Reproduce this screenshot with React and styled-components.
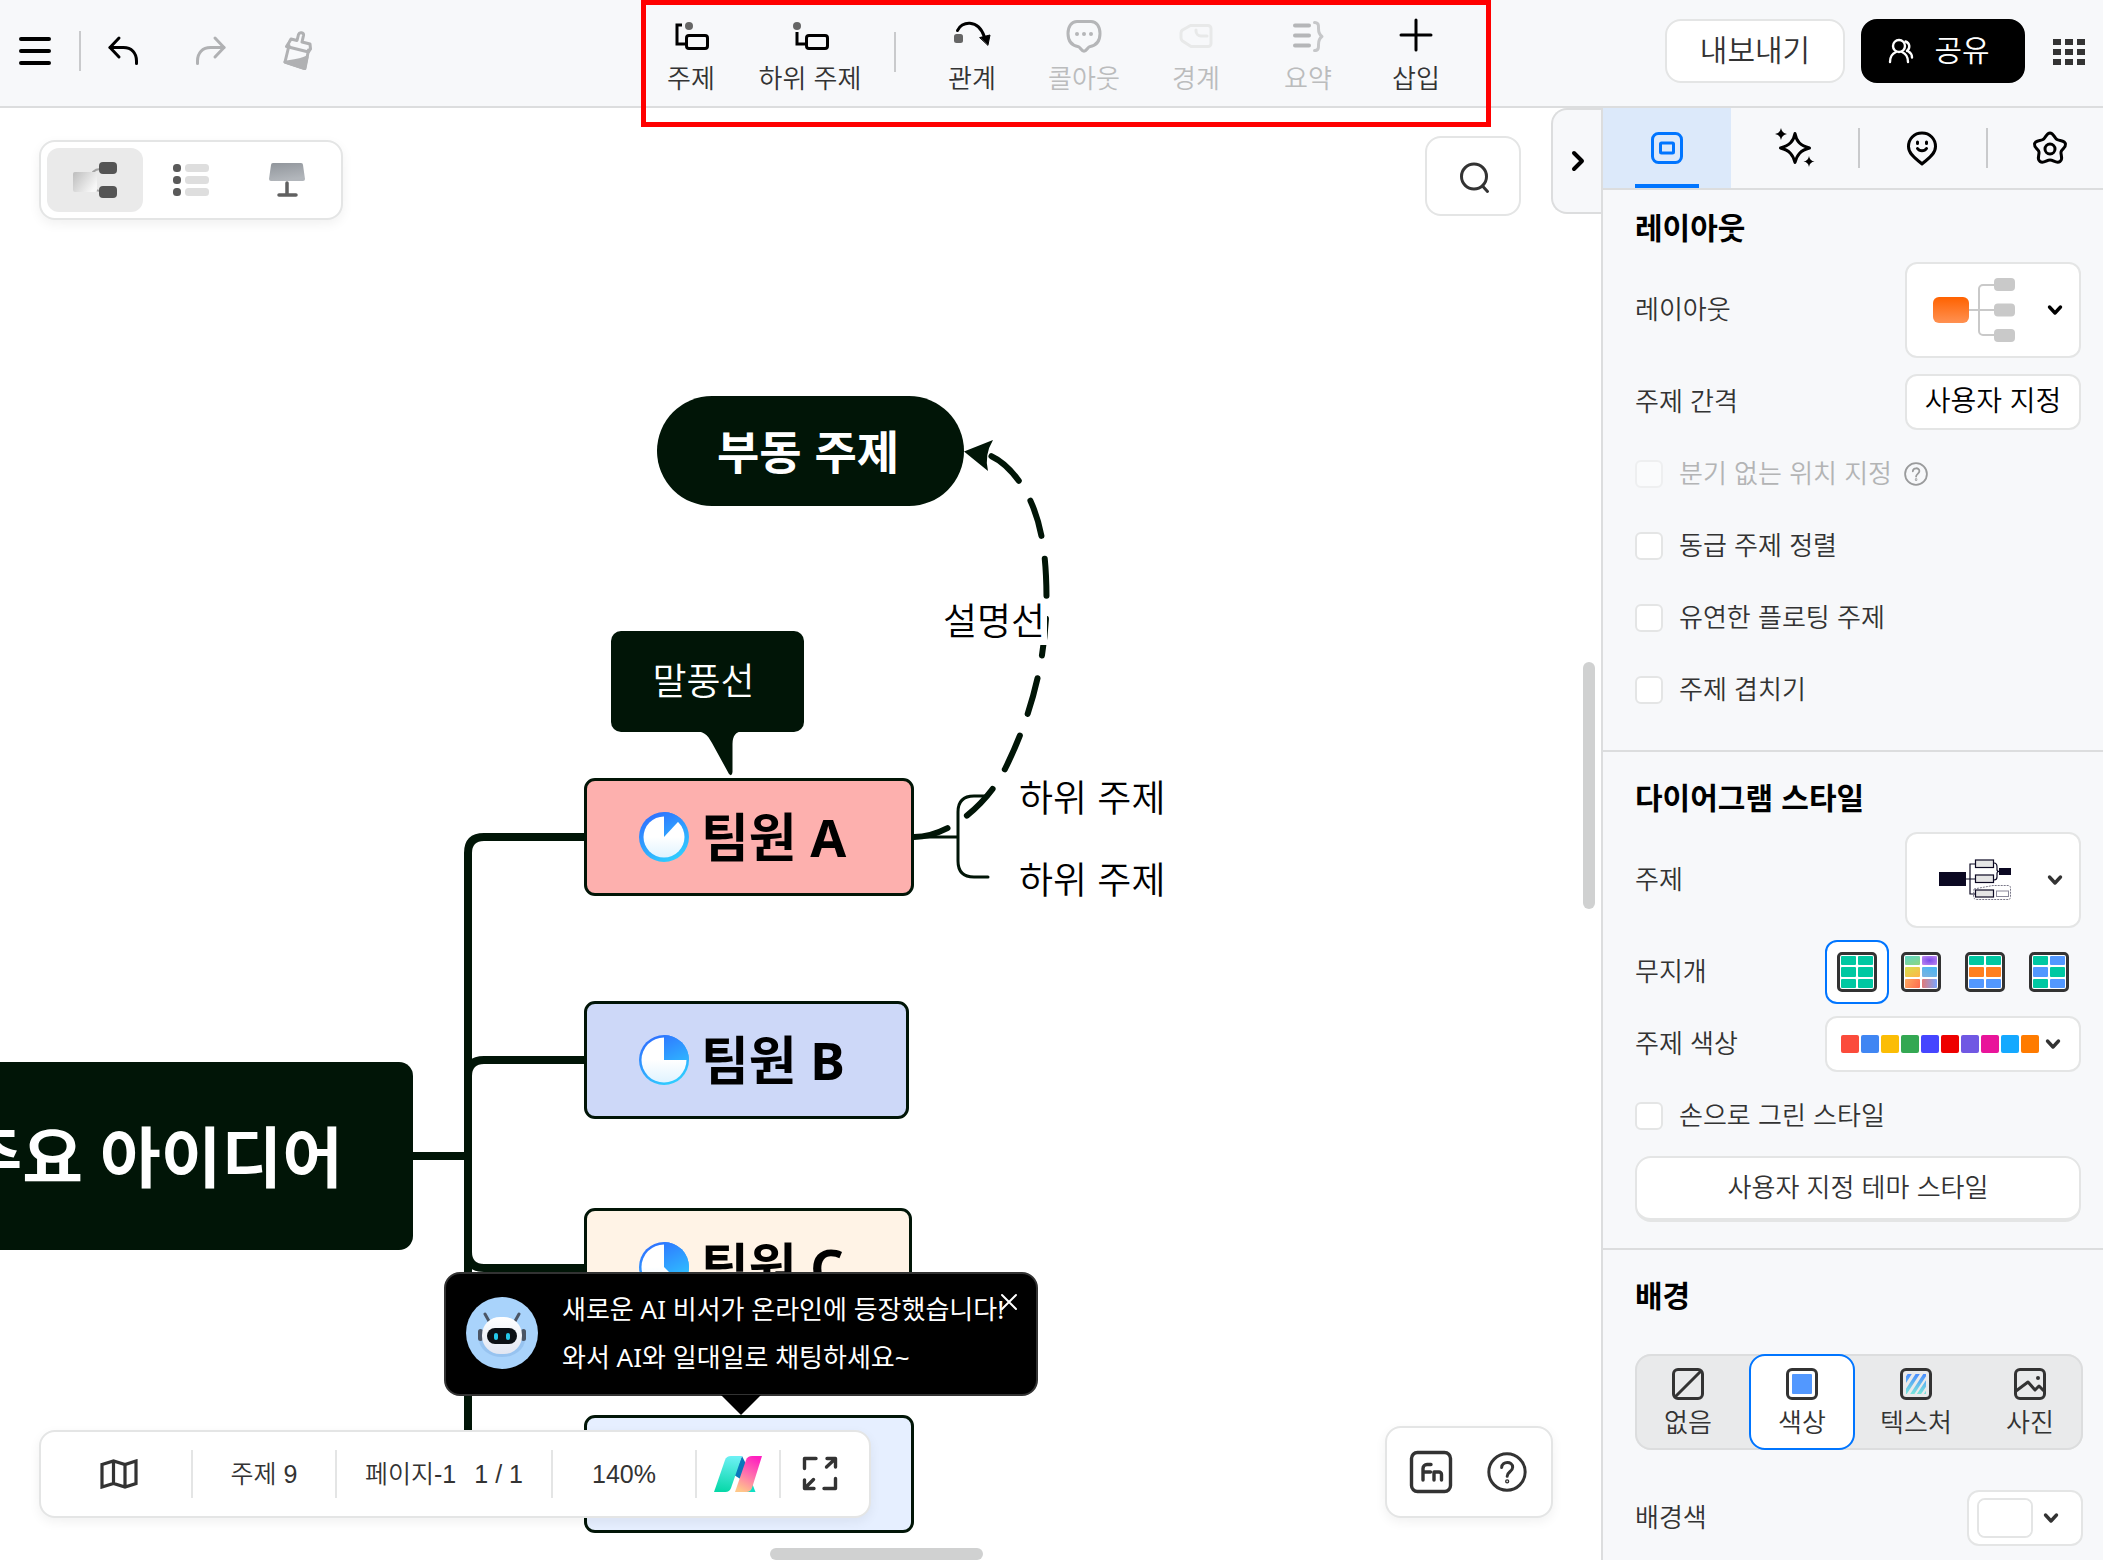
import React, { useState } from 'react';
import styled, { createGlobalStyle, css } from 'styled-components';

const ink = '#333333';
const dark = '#011507';
const line = '#dcddde';
const soft = '#e4e5e5';
const blue = '#0075ff';
const surface = '#f7f8fa';

const GlobalStyle = createGlobalStyle`
  *, *::before, *::after { box-sizing: border-box; }
  html, body, #root { height: 100%; }
  body {
    margin: 0;
    overflow: hidden;
    background: #ffffff;
    color: ${ink};
    font-family: "Liberation Sans", "Noto Sans CJK KR", sans-serif;
    font-size: 26px;
    font-weight: 350;
    line-height: 32px;
  }
  button, input, select { font: inherit; color: inherit; margin: 0; }
  button { border: 0; padding: 0; background: none; cursor: pointer; }
  button:disabled { cursor: default; }
  svg { display: block; flex: none; }
`;

const Page = styled.div`
  display: flex;
  flex-direction: column;
  height: 100vh;
`;

/* ---------- header ---------- */

const Header = styled.header`
  position: relative;
  z-index: 2;
  display: grid;
  grid-template-columns: 641fr 850fr 612fr;
  height: 108px;
  background: ${surface};
  border-bottom: 2px solid ${line};
`;

const HistoryTools = styled.div`
  display: flex;
  align-items: center;
  height: 102px;
  padding-left: 15px;
`;

const IconButton = styled.button`
  display: grid;
  place-items: center;
  width: ${(p) => p.$size || 40}px;
  height: ${(p) => p.$size || 40}px;
  color: ${(p) => (p.$muted ? '#b0b1b3' : '#000000')};
  margin-right: ${(p) => p.$gap || 0}px;
`;

const Rule = styled.span`
  flex: none;
  width: 2px;
  height: 40px;
  margin-right: 22px;
  background: #c9cacc;
`;

const InsertTools = styled.nav`
  position: relative;
  display: flex;
  padding-left: 2px;
`;

const Highlight = styled.div`
  position: absolute;
  inset: 0 0 -21px 0;
  border: 5px solid #ff0000;
  pointer-events: none;
`;

const Tool = styled.button`
  display: flex;
  flex-direction: column;
  align-items: center;
  gap: 7px;
  width: ${(p) => p.$width || 112}px;
  padding-top: 16px;
  color: ${ink};
  white-space: nowrap;
  &:disabled { color: #bbbcbd; }
`;

const ToolRule = styled(Rule)`
  margin: 32px 20px 0 13px;
`;

const HeaderActions = styled.div`
  display: flex;
  align-items: center;
  justify-content: flex-end;
  gap: 16px;
  height: 102px;
  padding-right: 14px;
`;

const ActionButton = styled.button`
  display: flex;
  align-items: center;
  justify-content: center;
  gap: 20px;
  height: 64px;
  width: ${(p) => (p.$primary ? 164 : 180)}px;
  padding-right: ${(p) => (p.$primary ? 8 : 0)}px;
  margin-right: ${(p) => (p.$primary ? 8 : 0)}px;
  border: 2px solid ${(p) => (p.$primary ? '#000000' : soft)};
  border-radius: 16px;
  background: ${(p) => (p.$primary ? '#000000' : '#ffffff')};
  color: ${(p) => (p.$primary ? '#ffffff' : ink)};
  font-size: 30px;
  line-height: 40px;
`;

/* ---------- body ---------- */

const Body = styled.div`
  display: flex;
  flex: 1;
  min-height: 0;
`;

const Canvas = styled.main`
  position: relative;
  flex: 1;
  min-width: 0;
  overflow: hidden;
  background: #ffffff;
`;

const floating = css`
  position: absolute;
  display: flex;
  align-items: center;
  background: #ffffff;
  border: 2px solid ${soft};
  border-radius: 16px;
  box-shadow: 0 4px 12px rgba(0, 0, 0, 0.06);
`;

const ViewSwitch = styled.div`
  ${floating}
  top: 32px;
  left: 39px;
  padding: 6px;
`;

const ViewButton = styled.button`
  display: grid;
  place-items: center;
  width: 96px;
  height: 64px;
  border-radius: 12px;
  background: ${(p) => (p.$active ? '#eaeaea' : 'transparent')};
`;

const SearchButton = styled.button`
  ${floating}
  top: 28px;
  right: 80px;
  justify-content: center;
  width: 96px;
  height: 80px;
  padding: 3px 0 0 3px;
  box-shadow: none;
`;

const CollapseButton = styled.button`
  position: absolute;
  top: 0;
  right: 0;
  display: grid;
  place-items: center;
  width: 50px;
  height: 106px;
  padding-left: 2px;
  background: ${surface};
  border: 2px solid ${line};
  border-right: 0;
  border-radius: 16px 0 0 16px;
`;

const ScrollThumb = styled.div`
  position: absolute;
  border-radius: 6px;
  background: #d0d1d1;
  ${(p) =>
    p.$vertical
      ? 'right: 6px; top: 554px; width: 12px; height: 247px;'
      : 'bottom: 0; left: 770px; width: 213px; height: 12px;'}
`;

const StatusBar = styled.div`
  ${floating}
  left: 39px;
  bottom: 42px;
  height: 88px;
  font-size: 25px;
`;

const StatusCell = styled.button`
  display: flex;
  align-items: center;
  justify-content: center;
  gap: 18px;
  width: ${(p) => p.$width}px;
  height: 48px;
  white-space: nowrap;
  border-right: 2px solid ${soft};
  &:first-child { padding-left: 5px; }
  &:last-child { border-right: 0; padding-right: 10px; }
`;

const HelpBar = styled.div`
  ${floating}
  right: 48px;
  bottom: 42px;
  height: 92px;
  padding: 0 24px 0 22px;
  gap: 34px;
`;

/* ---------- mind map ---------- */

const Wires = styled.svg`
  position: absolute;
  top: 0;
  left: 0;
`;

const place = css`
  position: absolute;
  top: ${(p) => p.$y}px;
  left: ${(p) => p.$x}px;
`;

const topicFont = '"Noto Sans", "Noto Sans CJK KR", sans-serif';

const RootTopic = styled.div`
  ${place}
  display: flex;
  align-items: center;
  justify-content: flex-end;
  width: 500px;
  height: 188px;
  padding-right: 70px;
  border-radius: 14px;
  background: ${dark};
  color: #ffffff;
  font: 700 66px/80px ${topicFont};
  white-space: nowrap;
`;

const FloatingTopic = styled.div`
  ${place}
  display: grid;
  place-items: center;
  width: 307px;
  height: 110px;
  padding: 3px 5px 0 0;
  border-radius: 55px;
  background: ${dark};
  color: #ffffff;
  font-size: 46px;
  font-weight: 700;
  line-height: 56px;
`;

const Callout = styled.div`
  ${place}
  display: grid;
  place-items: center;
  width: 193px;
  height: 101px;
  padding: 2px 8px 0 0;
  border-radius: 10px;
  background: ${dark};
  color: #ffffff;
  font-size: 37px;
  line-height: 48px;
`;

const MainTopic = styled.div`
  ${place}
  display: flex;
  align-items: center;
  gap: 12px;
  width: ${(p) => p.$width}px;
  height: 118px;
  padding-left: 52px;
  border: 3px solid ${dark};
  border-radius: 11px;
  background: ${(p) => p.$fill};
  color: #000000;
  font: 700 52px/64px ${topicFont};
  white-space: nowrap;
`;

const SubTopic = styled.div`
  ${place}
  padding: 0 2px;
  background: #ffffff;
  color: #000000;
  font-size: 37px;
  line-height: 44px;
  white-space: nowrap;
`;

/* ---------- assistant bubble ---------- */

const Bubble = styled.aside`
  position: absolute;
  left: 444px;
  bottom: 164px;
  display: flex;
  align-items: center;
  gap: 24px;
  width: 594px;
  height: 124px;
  padding: 0 0 2px 20px;
  border: 2px solid #333333;
  border-radius: 16px;
  background: #000000;
  color: #ffffff;
  font: 400 26px/48px ${topicFont};
  white-space: nowrap;
  &::after {
    content: "";
    position: absolute;
    left: 275px;
    top: 121px;
    border: 20px solid transparent;
    border-top-color: #000000;
    border-bottom: 0;
  }
`;

const BubbleText = styled.p`
  margin: 0;
`;

const BubbleClose = styled.button`
  position: absolute;
  top: 19px;
  right: 18px;
`;

/* ---------- side panel ---------- */

const Panel = styled.aside`
  display: flex;
  flex-direction: column;
  flex: none;
  width: 502px;
  overflow: hidden;
  background: ${surface};
  border-left: 2px solid ${line};
`;

const Tabs = styled.div`
  display: flex;
  flex: none;
  border-bottom: 2px solid ${line};
`;

const Tab = styled.button`
  position: relative;
  display: grid;
  place-items: center;
  flex: 0 0 128px;
  height: 80px;
  padding-right: ${(p) => (p.$ruled ? 3 : 0)}px;
  background: ${(p) => (p.$active ? '#dce9fa' : 'transparent')};
  &::after {
    content: "";
    position: absolute;
    ${(p) =>
      p.$active
        ? `left: 32px; right: 32px; bottom: 0; height: 4px; background: ${blue};`
        : ''}
  }
  &::before {
    content: "";
    position: absolute;
    ${(p) => (p.$ruled ? 'left: -1px; top: 20px; width: 2px; height: 40px; background: #c9cacc;' : '')}
  }
`;

const Section = styled.section`
  display: flex;
  flex-direction: column;
  padding: ${(p) => p.$pad};
  border-bottom: 2px solid ${line};
  &:last-child { border-bottom: 0; }
`;

const SectionTitle = styled.h2`
  margin: 0 0 ${(p) => p.$below || 10}px;
  color: #000000;
  font-size: 30px;
  font-weight: 700;
  line-height: 46px;
`;

const Row = styled.div`
  display: flex;
  align-items: center;
  justify-content: space-between;
  margin-bottom: ${(p) => p.$below || 0}px;
`;

const RowLabel = styled.label`
  white-space: nowrap;
`;

const Picker = styled.div`
  position: relative;
  display: flex;
  align-items: center;
  justify-content: space-between;
  width: ${(p) => p.$width}px;
  height: ${(p) => p.$height}px;
  padding: ${(p) => p.$pad};
  background: #ffffff;
  border: 2px solid ${soft};
  border-radius: 12px;
`;

const PickerSelect = styled.select`
  position: absolute;
  inset: 0;
  width: 100%;
  height: 100%;
  opacity: 0;
  cursor: pointer;
`;

const SpacingButton = styled.button`
  width: 176px;
  height: 56px;
  background: #ffffff;
  border: 2px solid ${soft};
  border-radius: 12px;
  color: #000000;
  font-size: 28px;
  white-space: nowrap;
`;

const CheckRow = styled.label`
  display: flex;
  align-items: center;
  gap: 16px;
  height: 72px;
  color: ${(p) => (p.$muted ? '#b3b4b5' : ink)};
  white-space: nowrap;
`;

const Check = styled.input`
  appearance: none;
  flex: none;
  width: 28px;
  height: 28px;
  border: 2px solid ${soft};
  border-radius: 6px;
  background: #ffffff;
  &:checked { background: ${blue}; border-color: ${blue}; }
  &:disabled { opacity: 0.45; }
`;

const Hint = styled.span`
  margin-left: -4px;
`;

const HiddenRadio = styled.input`
  position: absolute;
  opacity: 0;
  width: 1px;
  height: 1px;
`;

const RainbowGroup = styled.div`
  display: flex;
`;

const RainbowOption = styled.label`
  position: relative;
  display: grid;
  place-items: center;
  width: 64px;
  height: 64px;
  border: 2px solid ${(p) => (p.$active ? blue : 'transparent')};
  border-radius: 12px;
  background: ${(p) => (p.$active ? '#ffffff' : 'transparent')};
`;

const RainbowGrid = styled.span`
  display: grid;
  grid-template-columns: 1fr 1fr;
  grid-template-rows: repeat(3, 1fr);
  gap: 2px;
  width: 40px;
  height: 40px;
  padding: 1px;
  border: 3px solid ${ink};
  border-radius: 5px;
  background: #ffffff;
`;

const RainbowCell = styled.span`
  border-radius: 1px;
  background: ${(p) => p.$fill};
`;

const Swatches = styled.span`
  display: flex;
  gap: 2px;
`;

const Swatch = styled.span`
  width: 18px;
  height: 18px;
  border-radius: 2px;
  background: ${(p) => p.$fill};
`;

const ThemeButton = styled.button`
  height: 66px;
  margin-top: 4px;
  background: #ffffff;
  border: 2px solid ${soft};
  border-bottom-width: 4px;
  border-radius: 16px;
`;

const Segments = styled.div`
  display: grid;
  grid-template-columns: repeat(4, 1fr);
  gap: 8px;
  height: 96px;
  margin-bottom: 40px;
  border-radius: 16px;
  background: #e9eaeb;
  box-shadow: inset 0 0 0 2px ${line};
`;

const Segment = styled.label`
  position: relative;
  display: flex;
  flex-direction: column;
  align-items: center;
  gap: 7px;
  padding-top: 12px;
  border: 2px solid ${(p) => (p.$active ? blue : 'transparent')};
  border-radius: 16px;
  background: ${(p) => (p.$active ? '#ffffff' : 'transparent')};
  white-space: nowrap;
`;

const ColorInput = styled.input`
  appearance: none;
  width: 56px;
  height: 40px;
  padding: 0;
  border: 2px solid ${soft};
  border-radius: 8px;
  background: #ffffff;
  overflow: hidden;
  &::-webkit-color-swatch-wrapper { padding: 0; }
  &::-webkit-color-swatch { border: 0; }
`;

/* ---------- drawings ---------- */

const Stroke = ({ w = 40, h = 40, sw = 3, color = 'currentColor', children }) => (
  <svg
    width={w}
    height={h}
    viewBox={`0 0 ${w} ${h}`}
    fill="none"
    stroke={color}
    strokeWidth={sw}
    strokeLinecap="round"
    strokeLinejoin="round"
    aria-hidden="true"
  >
    {children}
  </svg>
);

const Chevron = ({ color = ink }) => (
  <Stroke w={16} h={12} sw={3.4} color={color}>
    <path d="M2.5 3l5.5 6 5.5-6" />
  </Stroke>
);

const TopicIcon = () => (
  <Stroke color="#000">
    <path d="M11 9H6v19h9" strokeLinecap="butt" strokeLinejoin="miter" />
    <rect x="15.5" y="19.5" width="21" height="13" rx="2.5" />
    <circle cx="18" cy="10" r="4" fill="#666" stroke="none" />
  </Stroke>
);

const SubtopicIcon = () => (
  <Stroke color="#000">
    <path d="M7 16v12h9" strokeLinecap="butt" strokeLinejoin="miter" />
    <rect x="16.5" y="19.5" width="21" height="13" rx="2.5" />
    <circle cx="7" cy="10" r="4" fill="#666" stroke="none" />
  </Stroke>
);

const RelationIcon = () => (
  <Stroke color="#000">
    <path d="M5.500 14.500C9 5.500 26 2 32.500 21" />
    <path d="M28 21.500l10-2.500-2 10z" fill="#000" stroke="#000" strokeWidth="1" />
    <rect x="2" y="18" width="9" height="9" rx="2.5" fill="#666" stroke="none" />
  </Stroke>
);

const CalloutIcon = () => (
  <Stroke color="#b5b6b8">
    <path d="M13 5.500h14c5.500 0 9 5 9 12 0 8-3.500 12-10.500 13.200-1.500.3-3 4.500-5.500 4.500s-4-4.200-5.500-4.500C7.500 29.500 4 25.500 4 17.500c0-7 3.500-12 9-12z" />
    <g fill="#b5b6b8" stroke="none">
      <circle cx="13" cy="18" r="2" />
      <circle cx="20" cy="18" r="2" />
      <circle cx="27" cy="18" r="2" />
    </g>
  </Stroke>
);

const BoundaryIcon = () => (
  <Stroke color="#e8e9e9">
    <path d="M14.500 9.500H32a3 3 0 013 3v15a3 3 0 01-3 3H15L6.500 25a4 4 0 01-1.500-3v-5a4 4 0 011.500-3z" />
    <path d="M20 14v1a5 5 0 005 5h6" />
  </Stroke>
);

const SummaryIcon = () => (
  <Stroke color="#b5b6b8">
    <path d="M7 9.500h14M7 19.500h14M7 29.500h14" strokeWidth="4" />
    <path d="M26.500 6.500c4.500 0 4 3.500 4 6 0 3.500.5 6 3.500 8-3 2-3.500 4.500-3.500 8 0 2.500.5 6-4 6" stroke="#c6c7c9" />
  </Stroke>
);

const PlusIcon = () => (
  <Stroke color="#000">
    <path d="M20 4v30M5 19h30" />
  </Stroke>
);

const MenuIcon = () => (
  <Stroke w={32} h={28} sw={4} color="#000">
    <path d="M2 2h28M2 14h28M2 26h28" />
  </Stroke>
);

const UndoIcon = ({ flip }) => (
  <Stroke w={32} h={32}>
    <g transform={flip ? 'translate(32 0) scale(-1 1)' : undefined}>
      <path d="M12 3L3 12.500 12 22" />
      <path d="M3 12.500h13.500c8 0 13 5.500 13 13.500v2.500" />
    </g>
  </Stroke>
);

const BrushIcon = () => (
  <Stroke w={36} h={40}>
    <path d="M8 11.500l2-3.500 6 1.500 1.500-6c1-3 5.500-2 5 1l-1.500 6.500 8 2 .5 5-2 3-22-5.500z" />
    <path d="M8 14.500L4 31l20 6.500 3.500-18.500" />
    <path d="M4 31c8-1 16-1.500 22-5l-2.500 11.500z" fill="currentColor" />
  </Stroke>
);

const PeopleIcon = () => (
  <Stroke w={26} h={26} sw={2.4} color="#fff">
    <circle cx="11" cy="8" r="6" />
    <path d="M2 24c0-5 2.500-8.500 6-10M20 24c0-5-2.500-8.500-6-10" />
    <path d="M17.500 3.500c4.500 1.500 5 6.500 1.500 9.500M20.500 13.500c2.500 1.500 3.500 3.500 3.500 6" />
  </Stroke>
);

const AppsIcon = () => (
  <svg width="32" height="28" viewBox="0 0 32 28" fill={ink} aria-hidden="true">
    {[0, 12, 24].map((x) =>
      [2, 12, 22].map((y) => <rect key={`${x}-${y}`} x={x} y={y} width="8" height="6" />)
    )}
  </svg>
);

const MapViewIcon = () => (
  <svg width="48" height="40" viewBox="0 0 48 40" aria-hidden="true">
    <defs>
      <linearGradient id="mv" x1="0" y1="0" x2="1" y2="0.600">
        <stop offset="0" stopColor="#bdbdbd" />
        <stop offset="1" stopColor="#f7f7f7" />
      </linearGradient>
    </defs>
    <path d="M29 9c-6 0-9 4-10 11 1 7 4 11 10 11" fill="none" stroke="#a3a3a3" strokeWidth="2" />
    <rect x="2" y="12" width="24" height="20" rx="2" fill="url(#mv)" />
    <rect x="28" y="2" width="18" height="12" rx="4" fill="#555" />
    <rect x="28" y="26" width="18" height="12" rx="4" fill="#555" />
  </svg>
);

const OutlineViewIcon = () => (
  <svg width="36" height="32" viewBox="0 0 36 32" aria-hidden="true">
    {[0, 12, 24].map((y) => (
      <g key={y}>
        <rect x="0" y={y} width="8" height="8" rx="3.5" fill="#5a5a5a" />
        <rect x="12" y={y} width="24" height="8" rx="3.5" fill="#dedede" />
      </g>
    ))}
  </svg>
);

const SlidesViewIcon = () => (
  <svg width="36" height="34" viewBox="0 0 36 34" aria-hidden="true">
    <defs>
      <linearGradient id="sv" x1="0" y1="0" x2="0.300" y2="1">
        <stop offset="0" stopColor="#90959b" />
        <stop offset="1" stopColor="#b2b6bb" />
      </linearGradient>
    </defs>
    <path d="M4 0h28a2 2 0 012 2l2 14a2 2 0 01-2 2H2a2 2 0 01-2-2L2 2a2 2 0 012-2z" fill="url(#sv)" />
    <path d="M18 20v12M10 32h17" stroke="#606060" strokeWidth="3.5" strokeLinecap="round" />
  </svg>
);

const SearchIcon = () => (
  <Stroke w={30} h={32} sw={3} color={ink}>
    <circle cx="14" cy="14.500" r="12.500" />
    <path d="M22.500 24l5 5.500" />
  </Stroke>
);

const StyleTabIcon = () => (
  <Stroke w={36} h={36} color={blue}>
    <rect x="3.5" y="3.5" width="29" height="29" rx="6" />
    <rect x="11.5" y="13" width="13" height="10" rx="1" />
  </Stroke>
);

const SparkleIcon = () => (
  <Stroke w={40} h={40} color="#000">
    <path d="M20 5.500c1.500 8 5 12 14.500 14.500C25.500 22.500 22 26.500 20 34.500 18 26.500 14.500 22.500 5.500 20 14.500 17.500 18.500 13.500 20 5.500z" />
    <path d="M6 0q.8 5.200 6 6-5.200.8-6 6-.8-5.200-6-6 5.200-.8 6-6zM34 28q.7 4.800 5.500 5.500-4.800.7-5.500 5.500-.7-4.800-5.500-5.500 4.800-.7 5.500-5.500z" fill="#000" stroke="none" />
  </Stroke>
);

const StickerIcon = () => (
  <Stroke w={32} h={36} color="#000">
    <path d="M16 3c8 0 13.500 6 13.500 13.500C29.500 25 20 30 16 34 12 30 2.500 25 2.500 16.500 2.500 9 8 3 16 3z" />
    <path d="M11.500 12v1.500M20.500 12v1.500M11.500 18.500c2 3 7 3 9 0" />
  </Stroke>
);

const FlowerIcon = () => (
  <Stroke w={36} h={36} color="#000">
    <path d="M18 3c3.500 0 4.500 5 7 6.500s8 .5 8.500 4.500-4 5-4.500 8 2.500 7-1 9.500-6.500-1.500-10-1.500-6.500 4-10 1.500-.5-6.500-1-9.500-5-4-4.500-8 6-3 8.500-4.500S14.500 3 18 3z" />
    <circle cx="18" cy="19" r="5" />
  </Stroke>
);

const CollapseIcon = () => (
  <Stroke w={16} h={24} sw={4} color="#000">
    <path d="M4 4l8 8-8 8" />
  </Stroke>
);

const HelpIcon = ({ size, color, sw = 1.8 }) => (
  <svg width={size} height={size} viewBox="0 0 24 24" fill="none" stroke={color} strokeWidth={sw} strokeLinecap="round" aria-hidden="true">
    <circle cx="12" cy="12" r="10.900" />
    <path d="M8.800 9.300c.2-4 6.600-4 6.600-.2 0 2.700-3.300 2.800-3.300 5.400" />
    <circle cx="12.100" cy="17.600" r="0.400" />
  </svg>
);

const FnIcon = () => (
  <Stroke w={44} h={44} sw={3.4} color={ink}>
    <rect x="2.5" y="2.5" width="39" height="39" rx="6" />
    <path d="M14 30V18.500a4 4 0 014-4h4M14 22h7.500M25 30v-8h5a2.500 2.500 0 012.500 2.500V30" />
  </Stroke>
);

const LayoutPreview = () => (
  <svg width="82" height="64" viewBox="0 0 82 64" aria-hidden="true">
    <defs>
      <linearGradient id="lp" x1="0" y1="0" x2="0" y2="1">
        <stop offset="0" stopColor="#ff6200" />
        <stop offset="1" stopColor="#ff9152" />
      </linearGradient>
    </defs>
    <path d="M36 32h26M62 7H50a4 4 0 00-4 4v42a4 4 0 004 4h12" fill="none" stroke="#c9c9c9" strokeWidth="2" />
    <rect y="19" width="36" height="26" rx="6" fill="url(#lp)" />
    <rect x="61" y="0" width="21" height="13" rx="4" fill="#c9c9c9" />
    <rect x="61" y="25.5" width="21" height="13" rx="4" fill="#c9c9c9" />
    <rect x="61" y="51" width="21" height="13" rx="4" fill="#c9c9c9" />
  </svg>
);

const ThemePreview = () => (
  <svg width="72" height="42" viewBox="0 0 72 42" fill="none" aria-hidden="true">
    <rect y="13" width="27" height="14" fill="#0b0822" />
    <path d="M27 20h9M36 5h-5v30h5M55 4q3 0 3 4v2.500q0 2 2 2-2 0-2 2V18q0 3-3 3" stroke="#0b0822" strokeWidth="1.2" />
    <g fill="#e5e5e5" stroke="#0b0822" strokeWidth="1.2">
      <rect x="36.5" y="1" width="18" height="7.5" />
      <rect x="36.5" y="16" width="18" height="7.5" />
      <rect x="36.5" y="31" width="18" height="7" />
    </g>
    <rect x="60" y="9" width="12" height="7" fill="#0b0822" />
    <rect x="57.5" y="32" width="12" height="5.5" stroke="#8a889a" />
    <path d="M35 30l19-3.500h15q2.500 0 2.500 2.500v9q0 2.500-2.500 2.500H38q-3.500 0-3.500-3.500z" stroke="#6a687a" strokeWidth="0.9" strokeDasharray="2 1" />
  </svg>
);

const MapIcon = () => (
  <Stroke w={38} h={30} sw={3.2} color={ink}>
    <path d="M2 5.500L13.500 2 25 5.500 36 2v22.500L25 28l-11.500-3.500L2 28zM13.500 2v22.500M25 5.500V28" strokeLinejoin="miter" />
  </Stroke>
);

const FullscreenIcon = () => (
  <Stroke w={36} h={36} sw={3.4} color={ink}>
    <path d="M2.500 12.500V2.500H14M33.500 22.500V32.500H22" />
    <path d="M25 2.500h8.500V11M33 3l-8.500 8M2.500 24v8.500H12M3 32l8.500-8.500" />
  </Stroke>
);

const AiLogo = () => (
  <svg width="48" height="36" viewBox="0 0 48 36" aria-hidden="true">
    <defs>
      <linearGradient id="la" x1="0.500" y1="0" x2="0.400" y2="1">
        <stop offset="0" stopColor="#6cf0f4" />
        <stop offset="1" stopColor="#06d8a8" />
      </linearGradient>
      <linearGradient id="lb" x1="0.700" y1="0" x2="0.300" y2="1">
        <stop offset="0" stopColor="#ff1fc0" />
        <stop offset="0.500" stopColor="#ff6fae" />
        <stop offset="1" stopColor="#ffc789" />
      </linearGradient>
    </defs>
    <path d="M28 0l5 10-5 14-8-5z" fill="#0a77bb" />
    <path d="M36 22l5.500 14H27z" fill="#0ee0c4" />
    <path d="M11 4q1.500-4 6-4h11L17 32q-1.500 4-5.500 4H0z" fill="url(#la)" />
    <path d="M32 4q1.500-4 6-4h10L38 32q-1.500 4-5.500 4H21z" fill="url(#lb)" />
  </svg>
);

const Robot = () => (
  <svg width="72" height="72" viewBox="0 0 72 72" aria-hidden="true">
    <defs>
      <linearGradient id="rb" x1="0" y1="0" x2="0" y2="1">
        <stop offset="0" stopColor="#ffffff" />
        <stop offset="1" stopColor="#e1e6f2" />
      </linearGradient>
    </defs>
    <circle cx="36" cy="36" r="36" fill="#a9d3fb" />
    <ellipse cx="36" cy="42" rx="23" ry="18" fill="#8cb9ea" opacity="0.600" />
    <path d="M19 17l5 9M53 17l-5 9" stroke="#4b5565" strokeWidth="3" strokeLinecap="round" />
    <rect x="12" y="32" width="5" height="12" rx="2.5" fill="#4b5565" />
    <rect x="55" y="32" width="5" height="12" rx="2.5" fill="#4b5565" />
    <rect x="16" y="20" width="40" height="37" rx="18" fill="url(#rb)" />
    <rect x="21" y="31" width="30" height="16" rx="8" fill="#0b0f14" />
    <rect x="28" y="36" width="4" height="7" rx="2" fill="#25c7e8" />
    <rect x="40" y="36" width="4" height="7" rx="2" fill="#25c7e8" />
  </svg>
);

const wedges = {
  1: 'M25 25V0h15l4 4.500z',
  2: 'M25 25V0h25v25z',
  3: 'M25 25V0h25v50z',
};

const ProgressPie = ({ eighths }) => (
  <svg width="50" height="50" viewBox="0 0 50 50" aria-hidden="true">
    <defs>
      <linearGradient id={`pr${eighths}`} gradientUnits="userSpaceOnUse" x1="10" y1="0" x2="35" y2="50">
        <stop offset="0" stopColor="#2f6dff" />
        <stop offset="1" stopColor="#2fd0ff" />
      </linearGradient>
      <linearGradient id={`pi${eighths}`} x1="0" y1="0" x2="0" y2="1">
        <stop offset="0" stopColor="#ffffff" />
        <stop offset="0.500" stopColor="#ffffff" />
        <stop offset="1" stopColor="#e0f3ff" />
      </linearGradient>
      <clipPath id={`pc${eighths}`}>
        <circle cx="25" cy="25" r="25" />
      </clipPath>
    </defs>
    <circle cx="25" cy="25" r="25" fill={`url(#pr${eighths})`} />
    <circle cx="25" cy="25" r={eighths === 1 ? 20.5 : 22.5} fill={`url(#pi${eighths})`} />
    <path d={wedges[eighths]} fill={`url(#pr${eighths})`} clipPath={`url(#pc${eighths})`} />
  </svg>
);

/* ---------- data ---------- */

const insertTools = [
  { label: '주제', icon: TopicIcon, width: 96 },
  { label: '하위 주제', icon: SubtopicIcon, width: 142, ruled: true },
  { label: '관계', icon: RelationIcon },
  { label: '콜아웃', icon: CalloutIcon, disabled: true },
  { label: '경계', icon: BoundaryIcon, disabled: true },
  { label: '요약', icon: SummaryIcon, disabled: true },
  { label: '삽입', icon: PlusIcon, width: 104 },
];

const members = [
  { name: '팀원 A', y: 670, width: 330, fill: '#fdb0ae', eighths: 1 },
  { name: '팀원 B', y: 893, width: 325, fill: '#cdd8f8', eighths: 2 },
  { name: '팀원 C', y: 1100, width: 328, fill: '#fff3e6', eighths: 3 },
];

const layoutChecks = ['동급 주제 정렬', '유연한 플로팅 주제', '주제 겹치기'];

const green = '#00c8a2';
const sky = '#5298ff';
const orange = '#ff8021';
const rainbows = [
  [green, green, green, green, green, green],
  [
    'linear-gradient(160deg, #5fd6c8, #8ed67f)',
    'radial-gradient(#7a4bea, #c08af0)',
    'linear-gradient(150deg, #d8e04d, #ffb648)',
    'linear-gradient(200deg, #45b6f4, #7fb2e0)',
    'linear-gradient(120deg, #ffab60, #ff6a50)',
    'linear-gradient(90deg, #e07a78, #7ba6ff)',
  ],
  [green, green, orange, orange, sky, sky],
  [green, sky, sky, green, green, sky],
];

const palette = ['#fb4b3b', '#4086f3', '#fbbd05', '#34a853', '#4545ff', '#ee0000', '#7058e3', '#e9149a', '#14a9ff', '#ff7b00'];

const Frame32 = ({ children }) => (
  <svg width="32" height="32" viewBox="0 0 32 32" fill="none" stroke={ink} strokeWidth="3" strokeLinejoin="round" aria-hidden="true">
    {children}
    <rect x="1.5" y="1.5" width="29" height="29" rx="4.5" />
  </svg>
);

const backgrounds = [
  { label: '없음', art: <path d="M3 29L29 3" /> },
  { label: '색상', art: <rect x="6" y="6" width="20" height="20" rx="1" fill={sky} stroke="none" /> },
  {
    label: '텍스처',
    art: (
      <>
        <defs>
          <linearGradient id="tx" gradientUnits="userSpaceOnUse" x1="0" y1="6" x2="0" y2="26">
            <stop offset="0" stopColor="#4a8cff" />
            <stop offset="1" stopColor="#7ae6dc" />
          </linearGradient>
          <clipPath id="txc"><rect x="6" y="6" width="20" height="20" /></clipPath>
        </defs>
        <path clipPath="url(#txc)" d="M2 18l9-14M4 27L19 4M11 28L26 5M17 29l12-18M24 29l6-9" stroke="url(#tx)" strokeWidth="3.5" />
      </>
    ),
  },
  {
    label: '사진',
    art: (
      <>
        <path d="M2 23l12-9 7 8 4-4 5 5" />
        <circle cx="24" cy="10" r="2" fill={ink} stroke="none" />
      </>
    ),
  },
];

/* ---------- views ---------- */

const MindMap = () => (
  <>
    <Wires width="1200" height="1452" viewBox="0 108 1200 1452" fill="none" stroke={dark} aria-hidden="true">
      <g strokeWidth="8">
        <path d="M412 1156h56" />
        <path d="M586 837H484q-16 0-16 16v605q0 16 16 16h102" />
        <path d="M586 1060H484q-16 0-16 16" />
        <path d="M586 1268H484q-16 0-16-16" />
      </g>
      <path d="M913 837h45M988 796h-14q-16 0-16 16v49q0 16 16 16h14" strokeWidth="3" strokeLinecap="round" />
      <path
        d="M914 837C950 837 988 803 1005 769 1031 717 1046.500 658 1046.500 600 1046.500 559 1043 514 1019 481 1011 470 1000 460 991 456"
        strokeWidth="6"
        strokeLinecap="round"
        strokeDasharray="37 23.100"
        strokeDashoffset="2"
      />
      <path d="M964 451.500l29-11.500q-9 15-5 31z" fill={dark} stroke="none" />
      <path d="M692 731c12 0 15 3 20 12l17 31q3 3 3.500-2v-28q0-12 10-13z" fill={dark} stroke="none" />
    </Wires>
    <RootTopic $x={-87} $y={954}>주요 아이디어</RootTopic>
    <FloatingTopic $x={657} $y={288}>부동 주제</FloatingTopic>
    <Callout $x={611} $y={523}>말풍선</Callout>
    {members.map((m) => (
      <MainTopic key={m.name} $x={584} $y={m.y} $width={m.width} $fill={m.fill}>
        <ProgressPie eighths={m.eighths} />
        {m.name}
      </MainTopic>
    ))}
    <MainTopic $x={584} $y={1307} $width={330} $fill="#e6efff" />
    <SubTopic $x={941} $y={493}>설명선</SubTopic>
    <SubTopic $x={1017} $y={670}>하위 주제</SubTopic>
    <SubTopic $x={1017} $y={752}>하위 주제</SubTopic>
  </>
);

const LayoutSection = () => (
  <Section $pad="16px 22px 24px 32px">
    <SectionTitle>레이아웃</SectionTitle>
    <Row $below={16}>
      <RowLabel htmlFor="layout">레이아웃</RowLabel>
      <Picker $width={176} $height={96} $pad="0 16px 0 26px">
        <LayoutPreview />
        <Chevron color="#000" />
        <PickerSelect id="layout" />
      </Picker>
    </Row>
    <Row $below={8}>
      <RowLabel htmlFor="spacing">주제 간격</RowLabel>
      <SpacingButton id="spacing">사용자 지정</SpacingButton>
    </Row>
    <CheckRow $muted>
      <Check type="checkbox" disabled />
      분기 없는 위치 지정
      <Hint><HelpIcon size={24} color="#9a9b9c" /></Hint>
    </CheckRow>
    {layoutChecks.map((label) => (
      <CheckRow key={label}>
        <Check type="checkbox" />
        {label}
      </CheckRow>
    ))}
  </Section>
);

const StyleSection = () => {
  const [rainbow, setRainbow] = useState(0);
  return (
    <Section $pad="24px 22px 26px 32px">
      <SectionTitle>다이어그램 스타일</SectionTitle>
      <Row $below={12}>
        <RowLabel htmlFor="theme">주제</RowLabel>
        <Picker $width={176} $height={96} $pad="0 16px 0 32px">
          <ThemePreview />
          <Chevron />
          <PickerSelect id="theme" />
        </Picker>
      </Row>
      <Row $below={12}>
        <span>무지개</span>
        <RainbowGroup role="radiogroup" aria-label="무지개">
          {rainbows.map((cells, i) => (
            <RainbowOption key={i} $active={rainbow === i}>
              <HiddenRadio type="radio" name="rainbow" checked={rainbow === i} onChange={() => setRainbow(i)} />
              <RainbowGrid>
                {cells.map((fill, j) => <RainbowCell key={j} $fill={fill} />)}
              </RainbowGrid>
            </RainbowOption>
          ))}
        </RainbowGroup>
      </Row>
      <Row $below={8}>
        <RowLabel htmlFor="colors">주제 색상</RowLabel>
        <Picker $width={256} $height={56} $pad="0 18px 0 14px">
          <Swatches>{palette.map((c) => <Swatch key={c} $fill={c} />)}</Swatches>
          <Chevron />
          <PickerSelect id="colors" />
        </Picker>
      </Row>
      <CheckRow>
        <Check type="checkbox" />
        손으로 그린 스타일
      </CheckRow>
      <ThemeButton>사용자 지정 테마 스타일</ThemeButton>
    </Section>
  );
};

const BackgroundSection = () => {
  const [kind, setKind] = useState('색상');
  return (
    <Section $pad="24px 20px 14px 32px">
      <SectionTitle $below={34}>배경</SectionTitle>
      <Segments role="radiogroup" aria-label="배경">
        {backgrounds.map(({ label, art }) => (
          <Segment key={label} $active={kind === label}>
            <HiddenRadio type="radio" name="background" checked={kind === label} onChange={() => setKind(label)} />
            <Frame32>{art}</Frame32>
            {label}
          </Segment>
        ))}
      </Segments>
      <Row>
        <RowLabel htmlFor="bgcolor">배경색</RowLabel>
        <Picker $width={116} $height={56} $pad="0 22px 0 8px">
          <ColorInput id="bgcolor" type="color" defaultValue="#ffffff" />
          <Chevron />
        </Picker>
      </Row>
    </Section>
  );
};

export default function App() {
  return (
    <Page>
      <GlobalStyle />
      <Header>
        <HistoryTools>
          <IconButton aria-label="메뉴" $gap={24}><MenuIcon /></IconButton>
          <Rule />
          <IconButton aria-label="실행 취소" $gap={48}><UndoIcon /></IconButton>
          <IconButton aria-label="다시 실행" $gap={48} $muted><UndoIcon flip /></IconButton>
          <IconButton aria-label="서식 복사" $muted><BrushIcon /></IconButton>
        </HistoryTools>
        <InsertTools>
          {insertTools.map(({ label, icon: Icon, width, disabled, ruled }) => (
            <React.Fragment key={label}>
              <Tool $width={width} disabled={disabled}>
                <Icon />
                {label}
              </Tool>
              {ruled && <ToolRule />}
            </React.Fragment>
          ))}
          <Highlight />
        </InsertTools>
        <HeaderActions>
          <ActionButton>내보내기</ActionButton>
          <ActionButton $primary><PeopleIcon />공유</ActionButton>
          <IconButton aria-label="앱"><AppsIcon /></IconButton>
        </HeaderActions>
      </Header>
      <Body>
        <Canvas>
          <MindMap />
          <ViewSwitch>
            <ViewButton aria-label="마인드맵" $active><MapViewIcon /></ViewButton>
            <ViewButton aria-label="개요"><OutlineViewIcon /></ViewButton>
            <ViewButton aria-label="슬라이드"><SlidesViewIcon /></ViewButton>
          </ViewSwitch>
          <SearchButton aria-label="검색"><SearchIcon /></SearchButton>
          <CollapseButton aria-label="패널 접기"><CollapseIcon /></CollapseButton>
          <ScrollThumb $vertical />
          <ScrollThumb />
          <StatusBar>
            <StatusCell $width={152} aria-label="지도"><MapIcon /></StatusCell>
            <StatusCell $width={144}>주제 9</StatusCell>
            <StatusCell $width={216}><span>페이지-1</span><span>1 / 1</span></StatusCell>
            <StatusCell $width={144}>140%</StatusCell>
            <StatusCell $width={84} aria-label="AI"><AiLogo /></StatusCell>
            <StatusCell $width={88} aria-label="전체 화면"><FullscreenIcon /></StatusCell>
          </StatusBar>
          <Bubble>
            <Robot />
            <BubbleText>
              새로운 AI 비서가 온라인에 등장했습니다!
              <br />
              와서 AI와 일대일로 채팅하세요~
            </BubbleText>
            <BubbleClose aria-label="닫기">
              <Stroke w={18} h={18} sw={2} color="#fff"><path d="M2 2l14 14M16 2L2 16" /></Stroke>
            </BubbleClose>
          </Bubble>
          <HelpBar>
            <IconButton aria-label="단축키" $size={44}><FnIcon /></IconButton>
            <IconButton aria-label="도움말"><HelpIcon size={40} color={ink} /></IconButton>
          </HelpBar>
        </Canvas>
        <Panel>
          <Tabs role="tablist">
            <Tab role="tab" aria-label="스타일" aria-selected="true" $active><StyleTabIcon /></Tab>
            <Tab role="tab" aria-label="AI 도구"><SparkleIcon /></Tab>
            <Tab role="tab" aria-label="스티커" $ruled><StickerIcon /></Tab>
            <Tab role="tab" aria-label="클립아트" $ruled><FlowerIcon /></Tab>
          </Tabs>
          <LayoutSection />
          <StyleSection />
          <BackgroundSection />
        </Panel>
      </Body>
    </Page>
  );
}
